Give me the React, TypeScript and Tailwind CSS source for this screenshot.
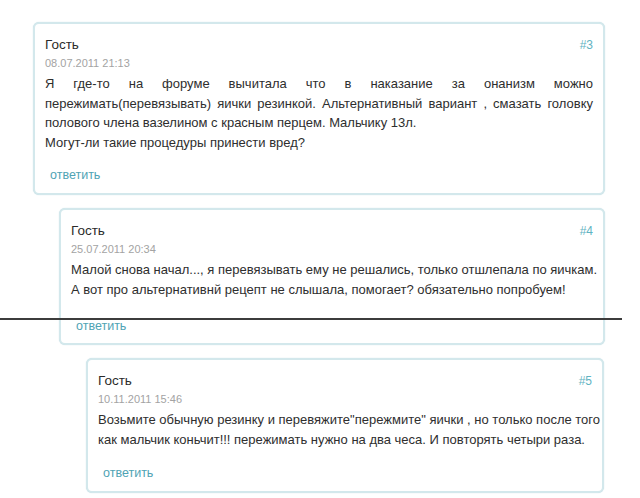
import React from "react";

type Line = { text: string; justify?: boolean };

function Card({
  ml,
  w,
  h,
  num,
  date,
  lines,
  bodyGap,
}: {
  ml: string;
  w: string;
  h: string;
  num: string;
  date: string;
  lines: Line[];
  bodyGap: string;
}) {
  return (
    <div
      className={`${ml} ${w} ${h} flex flex-col rounded-[6px] border-2 border-[#d3e8ec] bg-white pl-[10px] pr-[10px] pt-[13px] shadow-[0_0_1px_#b9d7de]`}
    >
      <div className="flex h-[16px] items-center justify-between leading-[16px]">
        <span className="text-[13.5px] text-[#2b2b2b]">Гость</span>
        <span className="text-[12px] text-[#5fb3c2]">{num}</span>
      </div>
      <div className="mt-[2px] h-[16px] text-[11px] leading-[16px] text-[#a3a3a3]">{date}</div>
      <div className="mt-[3px] text-[13px] leading-[19.5px] text-[#2e2e2e]">
        {lines.map((l, i) => (
          <div
            key={i}
            className={l.justify ? "text-justify [text-align-last:justify]" : "whitespace-nowrap"}
          >
            {l.text}
          </div>
        ))}
      </div>
      <div className={`${bodyGap} pl-[5px] text-[12.5px] leading-[16px] text-[#4fa3b4]`}>ответить</div>
    </div>
  );
}

export default function App() {
  return (
    <div
      className="relative h-[498px] w-[640px] overflow-hidden bg-white pt-[22px]"
      style={{ fontFamily: '"Liberation Sans", Arial, sans-serif' }}
    >
      <div className="flex flex-col gap-[13px]">
        <Card
          ml="ml-[33px]"
          w="w-[572px]"
          h="h-[173px]"
          num="#3"
          date="08.07.2011 21:13"
          bodyGap="mt-[15px]"
          lines={[
            {
              text: "Я где-то на форуме вычитала что в наказание за онанизм можно",
              justify: true,
            },
            {
              text: "пережимать(перевязывать) яички резинкой. Альтернативный вариант , смазать головку",
              justify: true,
            },
            { text: "полового члена вазелином с красным перцем. Мальчику 13л." },
            { text: "Могут-ли такие процедуры принести вред?" },
          ]}
        />
        <Card
          ml="ml-[59px]"
          w="w-[546px]"
          h="h-[137px]"
          num="#4"
          date="25.07.2011 20:34"
          bodyGap="mt-[19px]"
          lines={[
            {
              text: "Малой снова начал..., я перевязывать ему не решались, только отшлепала по яичкам.",
            },
            {
              text: "А вот про альтернативнй рецепт не слышала, помогает? обязательно попробуем!",
            },
          ]}
        />
        <Card
          ml="ml-[86px]"
          w="w-[518px]"
          h="h-[135px]"
          num="#5"
          date="10.11.2011 15:46"
          bodyGap="mt-[16px]"
          lines={[
            {
              text: "Возьмите обычную резинку и перевяжите\"пережмите\" яички , но только после того",
            },
            {
              text: "как мальчик коньчит!!! пережимать нужно на два чеса. И повторять четыри раза.",
            },
          ]}
        />
      </div>
      <div className="absolute left-0 top-[318px] h-[2px] w-[622px] bg-[#3c3c3c]" />
    </div>
  );
}
